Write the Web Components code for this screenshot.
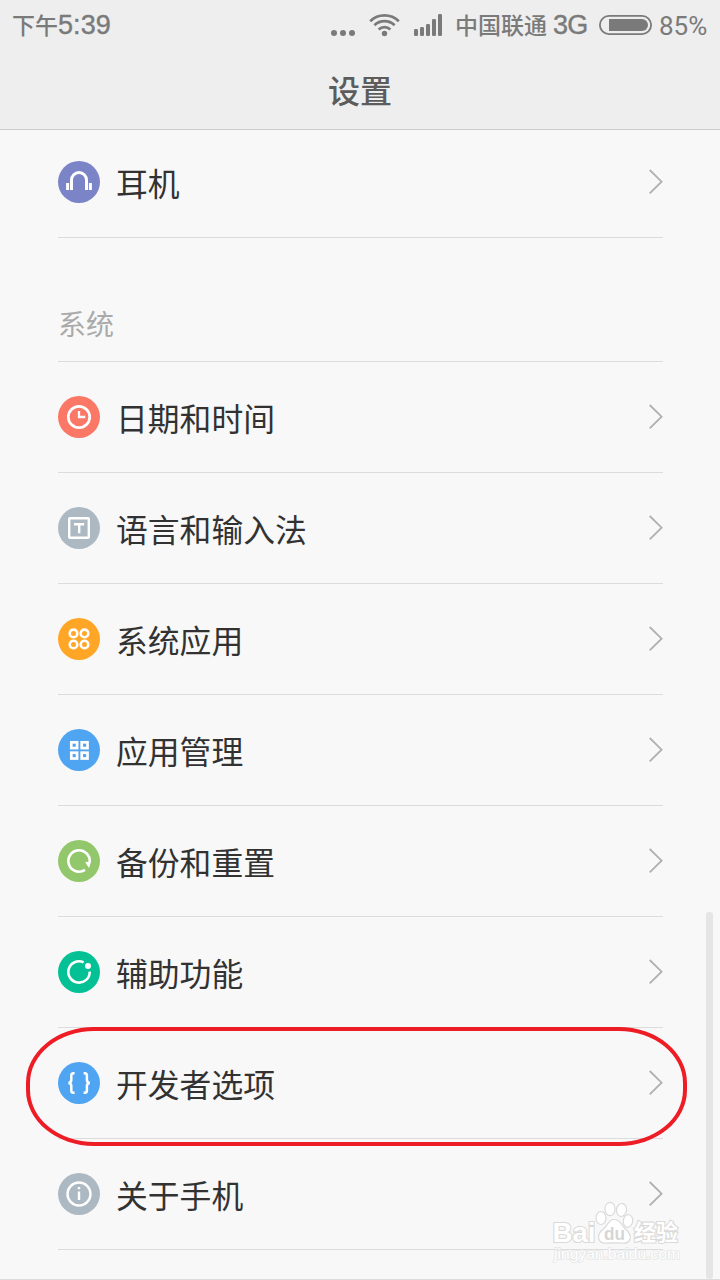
<!DOCTYPE html>
<html lang="zh-CN">
<head>
<meta charset="utf-8">
<title>设置</title>
<style>
  html, body { margin: 0; padding: 0; }
  body {
    width: 720px;
    height: 1280px;
    overflow: hidden;
    background: #f8f8f8;
    font-family: Roboto, "Noto Sans CJK SC", sans-serif;
  }
</style>
</head>
<body>
<settings-page>
  <status-bar slot="header" time="5:39" carrier="中国联通" network="3G" battery="85%"></status-bar>
  <title-bar slot="header">设置</title-bar>

  <settings-row icon="headset" color="#7b84c6">耳机</settings-row>
  <section-title>系统</section-title>
  <settings-row icon="clock" color="#fb7766">日期和时间</settings-row>
  <settings-row icon="input" color="#acb9c3">语言和输入法</settings-row>
  <settings-row icon="circles" color="#ffa627">系统应用</settings-row>
  <settings-row icon="squares" color="#50a5f3">应用管理</settings-row>
  <settings-row icon="backup" color="#92c76b">备份和重置</settings-row>
  <settings-row icon="assist" color="#03c194">辅助功能</settings-row>
  <settings-row icon="braces" color="#50a5f3">开发者选项</settings-row>
  <settings-row icon="info" color="#acb9c3">关于手机</settings-row>

  <scroll-thumb slot="overlay"></scroll-thumb>
  <highlight-ring slot="overlay"></highlight-ring>
  <water-mark slot="overlay"></water-mark>
</settings-page>

<script>
const ICONS = {
  headset: `
    <path d="M13.5 29V19a7.5 7.5 0 0 1 15 0V29" stroke-width="3"/>
    <path d="M9.6 22v7M32.4 22v7" stroke-width="3"/>`,
  clock: `
    <circle cx="21" cy="21" r="10.7" stroke-width="2.7"/>
    <path d="M21 15v6h6.3" stroke-width="2.3"/>`,
  input: `
    <rect x="11.2" y="11.2" width="19.6" height="19.6" rx=".8" stroke-width="2.4"/>
    <path d="M16 17.2h10.2M21.2 17v9.3" stroke-width="2.4"/>`,
  circles: `
    <g stroke-width="2.6">
      <circle cx="15.5" cy="15.4" r="3.8"/><circle cx="26.5" cy="15.4" r="3.8"/>
      <circle cx="15.5" cy="26.5" r="3.8"/><circle cx="26.5" cy="26.5" r="3.8"/>
    </g>`,
  squares: `
    <g stroke-width="2.7">
      <rect x="13.3" y="13.3" width="5.8" height="5.8"/><rect x="23.7" y="13.3" width="5.8" height="5.8"/>
      <rect x="13.3" y="23.7" width="5.8" height="5.8"/><rect x="23.7" y="23.7" width="5.8" height="5.8"/>
    </g>`,
  backup: `
    <path d="M27 29.9A10.7 10.7 0 1 1 31.7 22" stroke-width="2.6"/>
    <path d="M27.2 22.2 33.2 21.2 31 27.9z" fill="#fff" stroke="none"/>`,
  assist: `
    <path d="M31.7 20.6A10.7 10.7 0 1 1 25.6 11.3" stroke-width="2.6"/>
    <circle cx="30" cy="15" r="3" fill="#fff" stroke="none"/>`,
  braces: `
    <g stroke-width="2.5">
      <path d="M16.6 11.2h-1.2q-2.1 0-2.1 2.3v4.6q0 2.3-2.7 2.9 2.7.6 2.7 2.9v4.6q0 2.3 2.1 2.3h1.2"/>
      <path d="M25.6 11.2h1.2q2.1 0 2.1 2.3v4.6q0 2.3 2.7 2.9-2.7.6-2.7 2.9v4.6q0 2.3-2.1 2.3h-1.2"/>
    </g>`,
  info: `
    <circle cx="21" cy="21" r="11.5" stroke-width="2.4"/>
    <path d="M21 18.6v8.4M21 14v2.3" stroke-width="2.4"/>`
};

class SettingsPage extends HTMLElement {
  constructor() {
    super();
    this.attachShadow({ mode: 'open' });
    this.shadowRoot.innerHTML = `
      <style>
        :host {
          display: flex;
          flex-direction: column;
          position: relative;
          box-sizing: border-box;
          height: 1280px;
          overflow: hidden;
          background: #f8f8f8;
          border-bottom: 1px solid #dcdcdc;
        }
        header {
          flex: none;
          display: flex;
          flex-direction: column;
          box-sizing: border-box;
          height: 130px;
          background: #eee;
          border-bottom: 1px solid #ccc;
        }
        main { flex: 1; min-height: 0; overflow: hidden; }
        .list {
          display: flex;
          flex-direction: column;
          margin-top: -3px;
          padding: 0 57px 0 58px;
        }
      </style>
      <header><slot name="header"></slot></header>
      <main><div class="list"><slot></slot></div></main>
      <slot name="overlay"></slot>
    `;
  }
}

class StatusBar extends HTMLElement {
  constructor() {
    super();
    this.attachShadow({ mode: 'open' });
  }

  connectedCallback() {
    this.shadowRoot.innerHTML = `
      <style>
        :host {
          display: flex;
          align-items: center;
          justify-content: space-between;
          box-sizing: border-box;
          height: 50px;
          padding: 0 12px;
          color: #7a7a7a;
          font-size: 27px;
          line-height: 50px;
        }
        .time, .right { display: flex; align-items: center; }
        .cjk {
          padding-bottom: 2px;
          font-family: "Noto Sans CJK SC", sans-serif;
          font-size: 23px;
          font-weight: 500;
          line-height: 48px;
        }
        .num {
          font-family: "Liberation Sans", sans-serif;
          letter-spacing: .1px;
          -webkit-text-stroke: .4px #7a7a7a;
        }
        svg { display: block; flex: none; fill: #7a7a7a; }
        .signal { margin: 0 12px 0 13px; }
        .net { margin: 0 11px 0 6px; width: 35px; letter-spacing: -.8px; }
        .pct { margin-left: 7px; width: 49px; font-size: 26px; padding-top: 2px; line-height: 48px; }
      </style>
      <div class="time"><span class="cjk">下午</span><span class="num">${this.getAttribute('time')}</span></div>
      <div class="right">
        <svg width="38" height="50"><circle cx="3" cy="33" r="3"/><circle cx="12" cy="33" r="3"/><circle cx="21" cy="33" r="3"/></svg>
        <svg width="32" height="50">
          <circle cx="15.5" cy="33.5" r="2.7"/>
          <g fill="none" stroke="#7a7a7a" stroke-width="2.7">
            <path d="M1.2 21.3a20.4 20.4 0 0 1 28.6 0"/>
            <path d="M5.4 25.3a14.5 14.5 0 0 1 20.2 0"/>
            <path d="M9.6 29.4a8.6 8.6 0 0 1 11.8 0"/>
          </g>
        </svg>
        <svg class="signal" width="29" height="50">
          <rect x="0" y="29" width="4" height="7" rx="1.3"/>
          <rect x="6" y="27" width="4" height="9" rx="1.3"/>
          <rect x="12" y="24" width="4" height="12" rx="1.3"/>
          <rect x="18" y="19" width="4" height="17" rx="1.3"/>
          <rect x="24" y="14" width="4" height="22" rx="1.3"/>
        </svg>
        <span class="cjk">${this.getAttribute('carrier')}</span>
        <span class="num net">${this.getAttribute('network')}</span>
        <svg width="53" height="50">
          <rect x=".9" y="15.9" width="51.2" height="18.2" rx="9.1" fill="none" stroke="#7a7a7a" stroke-width="1.8"/>
          <path d="M10 19h33a6 6 0 0 1 0 12H10z"/>
        </svg>
        <span class="pct">${this.getAttribute('battery')}</span>
      </div>
    `;
  }
}

class TitleBar extends HTMLElement {
  constructor() {
    super();
    this.attachShadow({ mode: 'open' });
    this.shadowRoot.innerHTML = `
      <style>
        :host {
          display: flex;
          align-items: center;
          justify-content: center;
          height: 79px;
          color: #5c5c5c;
          font: 500 32px/79px "Noto Sans CJK SC", sans-serif;
        }
      </style>
      <slot></slot>
    `;
  }
}

class SectionTitle extends HTMLElement {
  constructor() {
    super();
    this.attachShadow({ mode: 'open' });
    this.shadowRoot.innerHTML = `
      <style>
        :host {
          display: flex;
          align-items: flex-end;
          box-sizing: border-box;
          height: 124px;
          padding-bottom: 18px;
          border-bottom: 1px solid #dcdcdc;
          color: #aaa;
          font: 400 28px/40px "Noto Sans CJK SC", sans-serif;
        }
      </style>
      <slot></slot>
    `;
  }
}

class SettingsRow extends HTMLElement {
  constructor() {
    super();
    this.attachShadow({ mode: 'open' });
  }

  connectedCallback() {
    this.shadowRoot.innerHTML = `
      <style>
        :host {
          display: flex;
          align-items: center;
          box-sizing: border-box;
          height: 111px;
          border-bottom: 1px solid #dcdcdc;
          color: #323232;
          font: 400 31.8px/48px "Noto Sans CJK SC", sans-serif;
        }
        svg { display: block; flex: none; fill: none; }
        .icon { stroke: #fff; }
        .label { flex: 1; padding: 0 0 1px 16px; }
      </style>
      <svg class="icon" width="42" height="42" viewBox="0 0 42 42">
        <circle cx="21" cy="21" r="21" fill="${this.getAttribute('color')}" stroke="none"/>
        ${ICONS[this.getAttribute('icon')]}
      </svg>
      <span class="label"><slot></slot></span>
      <svg width="15" height="26" viewBox="0 0 15 26"><path d="M1.7 1 13.6 12.7 1.7 24.4" stroke="#b0b0b0" stroke-width="1.8"/></svg>
    `;
  }
}

class ScrollThumb extends HTMLElement {
  constructor() {
    super();
    this.attachShadow({ mode: 'open' });
    this.shadowRoot.innerHTML = `
      <style>
        :host {
          display: block;
          position: absolute;
          right: 7px;
          top: 912px;
          width: 7px;
          height: 367px;
          border-radius: 3px;
          background: #e5e5e5;
        }
      </style>
    `;
  }
}

class HighlightRing extends HTMLElement {
  constructor() {
    super();
    this.attachShadow({ mode: 'open' });
    this.shadowRoot.innerHTML = `
      <style>
        :host {
          display: block;
          position: absolute;
          left: 26px;
          top: 1027px;
          box-sizing: border-box;
          width: 661px;
          height: 119px;
          border: 4px solid #ee1c25;
          border-radius: 68px / 56px;
        }
      </style>
    `;
  }
}

class WaterMark extends HTMLElement {
  constructor() {
    super();
    this.attachShadow({ mode: 'open' });
    this.shadowRoot.innerHTML = `
      <style>
        :host { display: block; position: absolute; left: 548px; top: 1198px; }
        svg { display: block; }
        text { paint-order: stroke; font-family: "Liberation Sans", "Noto Sans CJK SC", sans-serif; }
      </style>
      <svg width="140" height="72" fill="#fff" stroke="#dadada" stroke-width="1.2">
        <text x="4.5" y="44" font-size="28" font-weight="700" stroke-width="2.2" textLength="43" lengthAdjust="spacingAndGlyphs">Bai</text>
        <ellipse cx="53" cy="20" rx="5" ry="6.5"/>
        <ellipse cx="62" cy="11" rx="5" ry="6.7"/>
        <ellipse cx="73.5" cy="12" rx="5" ry="6.5" transform="rotate(8 73.5 12)"/>
        <ellipse cx="80" cy="23" rx="4.7" ry="6.3" transform="rotate(8 80 23)"/>
        <path d="M66 21.5c6 0 7.5 5.5 11 9 4.5 4 6 7 5 10.5-1 4-4.5 4.5-8 4.200-5-.5-11-.5-16 0-4 .3-6.500-1.500-7.300-4.500-1-4 1.300-7.200 5.300-10.200 3.500-3 4.500-9 10-9z"/>
        <text x="56" y="41.5" font-size="19" font-weight="700" fill="#d6d6d6" stroke="none" textLength="21" lengthAdjust="spacingAndGlyphs">du</text>
        <text x="86" y="42" font-size="22" font-weight="700" stroke-width="2.2" textLength="44" lengthAdjust="spacingAndGlyphs">经验</text>
        <text x="6" y="61" font-size="15" stroke-width="1.6" stroke="#e6e6e6" textLength="126" lengthAdjust="spacingAndGlyphs">jingyan.baidu.com</text>
      </svg>
    `;
  }
}

customElements.define('settings-page', SettingsPage);
customElements.define('status-bar', StatusBar);
customElements.define('title-bar', TitleBar);
customElements.define('section-title', SectionTitle);
customElements.define('settings-row', SettingsRow);
customElements.define('scroll-thumb', ScrollThumb);
customElements.define('highlight-ring', HighlightRing);
customElements.define('water-mark', WaterMark);
</script>
</body>
</html>
